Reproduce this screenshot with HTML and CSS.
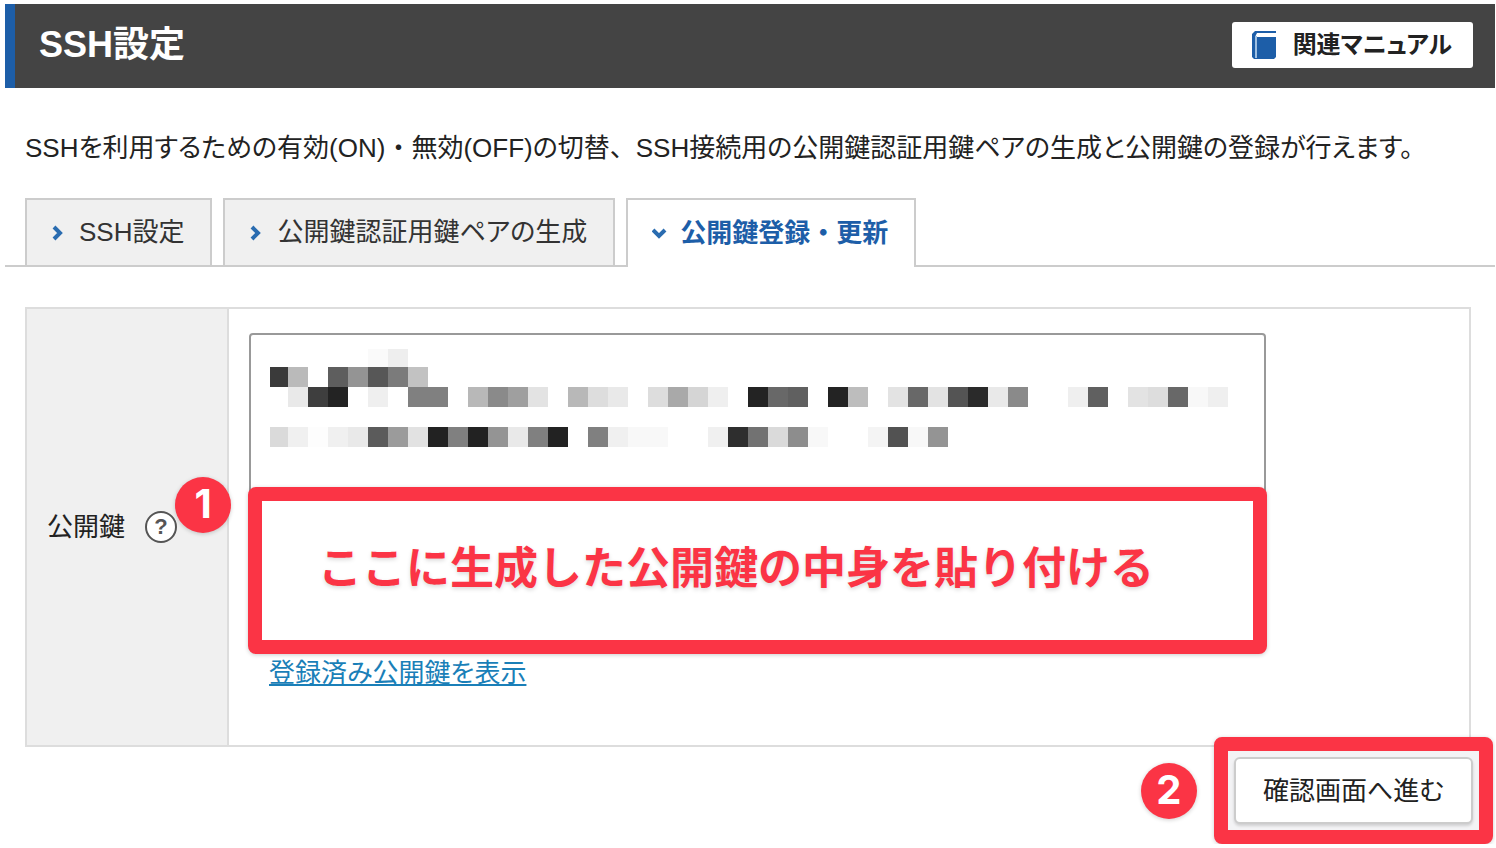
FILE: index.html
```
<!DOCTYPE html>
<html lang="ja">
    <head>
        <title>SSH設定</title>
        <meta charset="UTF-8">
        <meta name="viewport" content="width=device-width, initial-scale=1">
        <link rel="stylesheet" href="styles.css">
    </head>
    <body>

        <header class="header">
            <h1>SSH設定</h1>
            <a class="manual" href="#manual">
                <svg width="24" height="28" viewBox="0 0 24 28" aria-hidden="true">
                    <path d="M3 0h21v26l-2 2H2l-2-2V3z" fill="#1d5ea8"/>
                    <path d="M5 2h19v4H3z" fill="#fff"/>
                    <path d="M3 5h2v22H3z" fill="#9dbfe2"/>
                </svg>
                関連マニュアル
            </a>
        </header>

        <p class="lead">SSHを利用するための有効(ON)<span class="full">・</span>無効(OFF)の切替<span class="full">、</span>SSH接続用の公開鍵認証用鍵ペアの生成と公開鍵の登録が行えます。</p>

        <nav class="tabs">
            <a class="tab" href="#ssh">
                <svg class="arrow" width="16" height="16" viewBox="0 0 16 16" aria-hidden="true"><path d="M3 2l6 6-6 6"/></svg>
                SSH設定
            </a>
            <a class="tab" href="#generate">
                <svg class="arrow" width="16" height="16" viewBox="0 0 16 16" aria-hidden="true"><path d="M3 2l6 6-6 6"/></svg>
                公開鍵認証用鍵ペアの生成
            </a>
            <a class="tab active" href="#register">
                <svg class="arrow" width="16" height="16" viewBox="0 0 16 16" aria-hidden="true"><path d="M1 4l6 6 6-6"/></svg>
                <span class="full">公開鍵登録・更新</span>
            </a>
        </nav>

        <form>
            <table class="form-table">
                <tr>
                    <th scope="row">
                        <div class="name">
                            <label for="pubkey">公開鍵</label>
                            <button type="button" class="help">?</button>
                        </div>
                        <span class="badge badge-one">1</span>
                    </th>
                    <td>
                        <div class="field">
                            <textarea id="pubkey"></textarea>
                            <!-- masked key text -->
                            <svg class="mask" width="958" height="98" viewBox="0 0 958 98" shape-rendering="crispEdges" aria-hidden="true">
                                <path fill="#fafafa" d="M98 0h20v18h-20z"/>
                                <path fill="#eee" d="M118 0h20v18h-20z"/>

                                <path fill="#3a3a3a" d="M0 18h18v20H0z"/>
                                <path fill="#bababa" d="M18 18h20v20H18z"/>
                                <path fill="#5e5e5e" d="M58 18h20v20H58z"/>
                                <path fill="#949494" d="M78 18h20v20H78z"/>
                                <path fill="#575757" d="M98 18h20v20H98z"/>
                                <path fill="#7b7b7b" d="M118 18h20v20h-20z"/>
                                <path fill="#c2c2c2" d="M138 18h20v20h-20z"/>

                                <path fill="#e9e9e9" d="M18 38h20v20H18z"/>
                                <path fill="#3e3e3e" d="M38 38h20v20H38z"/>
                                <path fill="#232323" d="M58 38h20v20H58zM478 38h20v20h-20zM558 38h20v20h-20z"/>
                                <path fill="#efefef" d="M98 38h20v20H98zM438 38h20v20h-20zM798 38h20v20h-20zM938 38h20v20h-20z"/>
                                <path fill="#808080" d="M138 38h40v20h-40z"/>
                                <path fill="#b8b8b8" d="M198 38h20v20h-20zM298 38h20v20h-20z"/>
                                <path fill="#8a8a8a" d="M218 38h20v20h-20zM738 38h20v20h-20z"/>
                                <path fill="#9f9f9f" d="M238 38h20v20h-20z"/>
                                <path fill="#e3e3e3" d="M258 38h20v20h-20zM618 38h20v20h-20zM658 38h20v20h-20zM858 38h20v20h-20z"/>
                                <path fill="#ddd" d="M318 38h20v20h-20zM378 38h20v20h-20zM878 38h20v20h-20z"/>
                                <path fill="#e9e9e9" d="M338 38h20v20h-20zM718 38h20v20h-20z"/>
                                <path fill="#a9a9a9" d="M398 38h20v20h-20z"/>
                                <path fill="#d5d5d5" d="M418 38h20v20h-20z"/>
                                <path fill="#686868" d="M498 38h20v20h-20zM638 38h20v20h-20zM898 38h20v20h-20z"/>
                                <path fill="#606060" d="M518 38h20v20h-20zM818 38h20v20h-20z"/>
                                <path fill="#bdbdbd" d="M578 38h20v20h-20z"/>
                                <path fill="#545454" d="M678 38h20v20h-20z"/>
                                <path fill="#2a2a2a" d="M698 38h20v20h-20z"/>
                                <path fill="#f8f8f8" d="M918 38h20v20h-20z"/>

                                <path fill="#dadada" d="M0 78h18v20H0zM498 78h20v20h-20z"/>
                                <path fill="#f0f0f0" d="M18 78h20v20H18zM58 78h20v20H58zM338 78h20v20h-20zM438 78h20v20h-20z"/>
                                <path fill="#fdfdfd" d="M38 78h20v20H38z"/>
                                <path fill="#e9e9e9" d="M78 78h20v20H78zM238 78h20v20h-20z"/>
                                <path fill="#5b5b5b" d="M98 78h20v20H98z"/>
                                <path fill="#9b9b9b" d="M118 78h20v20h-20z"/>
                                <path fill="#e2e2e2" d="M138 78h20v20h-20z"/>
                                <path fill="#222" d="M158 78h20v20h-20zM198 78h20v20h-20zM278 78h20v20h-20z"/>
                                <path fill="#808080" d="M178 78h20v20h-20zM258 78h20v20h-20zM318 78h20v20h-20z"/>
                                <path fill="#949494" d="M218 78h20v20h-20zM658 78h20v20h-20z"/>
                                <path fill="#f8f8f8" d="M358 78h40v20h-40zM538 78h20v20h-20zM638 78h20v20h-20z"/>
                                <path fill="#2e2e2e" d="M458 78h20v20h-20z"/>
                                <path fill="#727272" d="M478 78h20v20h-20z"/>
                                <path fill="#8d8d8d" d="M518 78h20v20h-20z"/>
                                <path fill="#f4f4f4" d="M598 78h20v20h-20z"/>
                                <path fill="#525252" d="M618 78h20v20h-20z"/>
                            </svg>
                            <div class="callout">ここに生成した公開鍵の中身を貼り付ける</div>
                        </div>
                        <a class="show-key" href="#registered">登録済み公開鍵を表示</a>
                    </td>
                </tr>
            </table>

            <div class="actions">
                <span class="badge">2</span>
                <div class="highlight">
                    <button type="submit" class="next">確認画面へ進む</button>
                </div>
            </div>
        </form>

    </body>
</html>
```

FILE: styles.css
```
* {
    box-sizing: border-box;
}
body {
    margin: 4px 1px 4px 5px;
    background: #fff;
    color: #222;
    font-family: "Liberation Sans", "Noto Sans CJK JP", sans-serif;
    font-size: 26px;
    line-height: 40px;
    font-feature-settings: "palt";
}
button, textarea {
    font: inherit;
    font-feature-settings: inherit;
    color: inherit;
}
/* full-width punctuation */
.full {
    font-feature-settings: normal;
}

.header {
    display: flex;
    justify-content: space-between;
    align-items: center;
    height: 84px;
    padding: 0 22px 2px 24px;
    border-left: 10px solid #1d5ea8;
    background: #444;
}
.header h1 {
    margin: 0;
    color: #fff;
    font-size: 36px;
}
.manual {
    display: flex;
    align-items: center;
    gap: 17px;
    height: 46px;
    padding: 0 21px 0 20px;
    border-radius: 3px;
    background: #fff;
    color: #222;
    font-size: 24px;
    font-weight: bold;
    text-decoration: none;
}

.lead {
    margin: 40px 20px 30px;
}

.tabs {
    display: flex;
    gap: 11px;
    padding: 0 20px;
    border-bottom: 2px solid #ccc;
}
.tab {
    display: flex;
    align-items: center;
    gap: 12px;
    height: 69px;
    margin-bottom: -2px;
    padding: 0 26px 2px 24px;
    border: 2px solid #ccc;
    background: #f0f0f0;
    color: #333;
    text-decoration: none;
}
.tab.active {
    border-bottom: 0;
    background: #fff;
    color: #1d5ea8;
    font-weight: bold;
}
.arrow {
    margin-top: 2px;
    fill: none;
    stroke: #2a6cb0;
    stroke-width: 4;
}

.form-table {
    width: calc(100% - 44px);
    margin: 40px 24px 0 20px;
    border-collapse: collapse;
}
.form-table th,
.form-table td {
    border: 2px solid #ddd;
}
.form-table th {
    position: relative;
    width: 202px;
    padding: 0 20px;
    background: #f0f0f0;
    font-weight: normal;
    text-align: left;
}
.form-table td {
    padding: 24px 20px 52px;
}
.name {
    display: flex;
    align-items: center;
    gap: 20px;
}
.help {
    width: 32px;
    height: 32px;
    padding: 0;
    border: 2px solid #555;
    border-radius: 50%;
    background: #fff;
    color: #555;
    font-size: 22px;
    font-weight: bold;
    line-height: 28px;
}

.field {
    position: relative;
    max-width: 1017px;
}
.field textarea {
    display: block;
    width: 100%;
    height: 315px;
    padding: 20px;
    border: 2px solid #999;
    border-radius: 4px;
    resize: none;
}
.mask {
    position: absolute;
    top: 16px;
    left: 21px;
}
.callout {
    position: absolute;
    top: 154px;
    left: -1px;
    right: -1px;
    height: 167px;
    padding: 48px 56px;
    border: 14px solid #fb3445;
    border-radius: 8px;
    background: #fff;
    box-shadow: 0 1px 4px rgba(0, 0, 0, 0.2);
    color: #fb3445;
    font-size: 44px;
    font-weight: bold;
    font-feature-settings: normal;
    text-shadow: 0 2px 4px rgba(0, 0, 0, 0.15);
}
.show-key {
    display: table;
    margin: 5px 0 0 20px;
    color: #1a7fb8;
}

.badge {
    width: 56px;
    height: 56px;
    border-radius: 50%;
    background: #fb3445;
    box-shadow: 0 1px 4px rgba(0, 0, 0, 0.2);
    color: #fff;
    font-family: Inter, sans-serif;
    font-size: 40px;
    font-weight: bold;
    line-height: 54px;
    text-align: center;
}
.badge-one {
    position: absolute;
    top: 168px;
    right: -4px;
}

.actions {
    display: flex;
    justify-content: flex-end;
    align-items: center;
    gap: 17px;
    margin: -10px 2px 0 0;
}
.highlight {
    padding: 6px;
    border: 14px solid #fb3445;
    border-radius: 8px;
    background: #f3f3f5;
    box-shadow: 0 1px 4px rgba(0, 0, 0, 0.2);
}
.next {
    display: block;
    height: 67px;
    padding: 0 27px;
    border: 2px solid #ccc;
    border-radius: 6px;
    background: #fff;
    box-shadow: 0 2px 3px rgba(0, 0, 0, 0.15);
}
```
